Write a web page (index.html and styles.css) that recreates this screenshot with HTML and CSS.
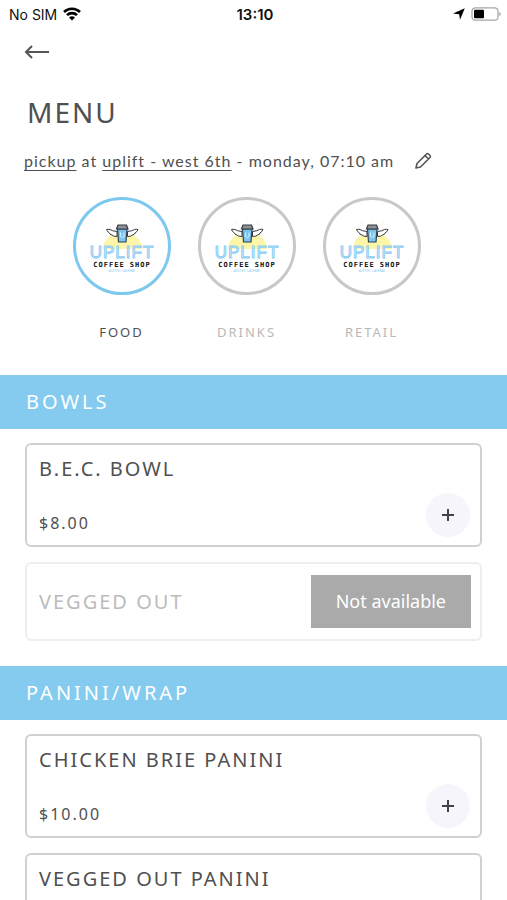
FILE: index.html
```html
<!DOCTYPE html>
<html lang="en">
<head>
    <meta charset="UTF-8">
    <meta name="viewport" content="width=device-width, initial-scale=1.0">
    <title>Uplift Coffee Shop - Menu</title>
    <link rel="stylesheet" href="styles.css">
</head>
<body>
    <div class="app">
        <div class="status-bar">
            <div class="status-left">
                <span>No SIM</span>
                <svg width="18" height="14" viewBox="0 0 18 14">
                    <path d="M1 5a11.500 11.500 0 0 1 16 0M4 8.200a7 7 0 0 1 10 0" fill="none" stroke="#000" stroke-width="2.600"/>
                    <path d="M9 13.500L6 10.600a4.400 4.400 0 0 1 6 0z"/>
                </svg>
            </div>
            <div class="status-time">13:10</div>
            <div class="status-right">
                <svg width="12" height="12" viewBox="0 0 12 12">
                    <path d="M11.800.3L7 11.800 6.200 6.200 0 5.500z"/>
                </svg>
                <svg width="30" height="14" viewBox="0 0 30 14">
                    <rect x="1" y=".8" width="26" height="12.400" rx="3.500" fill="none" stroke="#a6a6a6" stroke-width="1.300"/>
                    <rect x="3" y="2.800" width="10" height="8.400" rx="1"/>
                    <path d="M28.300 5v4q1.500-.5 1.500-2t-1.500-2z" fill="#a6a6a6"/>
                </svg>
            </div>
        </div>

        <header>
            <button class="back" aria-label="Back">
                <svg width="26" height="16" viewBox="0 0 26 16">
                    <path d="M25 8H2M8 2L2 8l6 6" fill="none" stroke="#555" stroke-width="2"/>
                </svg>
            </button>
            <h1>MENU</h1>
            <div class="order-info">
                <span><a href="#">pickup</a> at <a href="#">uplift - west 6th</a> - monday, 07:10 am</span>
                <button class="edit" aria-label="Edit order">
                    <svg width="18" height="18" viewBox="0 0 18 18">
                        <path d="M2 16l1-4.500L12.500 2q1-.8 2 0l1.500 1.500q.8 1 0 2L6.500 15zM11 3.500L14.500 7" fill="none" stroke="#555" stroke-width="1.600" stroke-linejoin="round"/>
                    </svg>
                </button>
            </div>
        </header>

        <nav class="categories">
            <button class="category active">
                <span class="circle">
                    <svg viewBox="0 0 92 92">
                        <!-- shop logo, reused by the other categories -->
                        <g id="logo">
                            <path d="M27 49a19.500 17 0 0 1 39 0z" fill="#fdf6a8"/>
                            <path d="M46 23v-3M37 25l-2-4M56 25l2-4M29 31l-4-3M64 31l4-3" stroke="#fdf9cf" stroke-width="1"/>
                            <path d="M41 31.500q-5-.5-7-2-2-.5-3.500 0 1 2.500 3 3.500 0 1.500 2.500 2 1 1.500 5 1.500zM51.500 31.500q5-.5 7-2 2-.5 3.500 0-1 2.500-3 3.500 0 1.500-2.500 2-1 1.500-5 1.500z" fill="#fff" stroke="#34393d" stroke-width="1" stroke-linejoin="round"/>
                            <path d="M41.500 29h9.500l-1 13h-7.500z" fill="#7cc5ef" stroke="#34434e" stroke-width="1.200"/>
                            <path d="M42 25h8.500l1.500 4H40.500z" fill="#8d9296" stroke="#34393d" stroke-width="1.200"/>
                            <path d="M44.500 32.500v4q1.700 2 3.500 0v-4" fill="none" stroke="#d7effc" stroke-width="1"/>
                            <text class="logo-name" x="46" y="58" text-anchor="middle">UPLIFT</text>
                            <text class="logo-shop" x="46" y="67" text-anchor="middle">COFFEE SHOP</text>
                            <text class="logo-tag" x="46" y="72" text-anchor="middle">AUSTIN / LAKEWAY</text>
                        </g>
                    </svg>
                </span>
                <span>FOOD</span>
            </button>
            <button class="category">
                <span class="circle"><svg viewBox="0 0 92 92"><use href="#logo"/></svg></span>
                <span>DRINKS</span>
            </button>
            <button class="category">
                <span class="circle"><svg viewBox="0 0 92 92"><use href="#logo"/></svg></span>
                <span>RETAIL</span>
            </button>
        </nav>

        <section>
            <h2>BOWLS</h2>
            <div class="items">
                <div class="item">
                    <div class="item-text">
                        <h3>B.E.C. BOWL</h3>
                        <p>$8.00</p>
                    </div>
                    <button class="add" aria-label="Add B.E.C. Bowl">
                        <svg width="12" height="12" viewBox="0 0 12 12"><path d="M6 0v12M0 6h12" stroke="#444" stroke-width="2"/></svg>
                    </button>
                </div>
                <div class="item sold-out">
                    <h3>VEGGED OUT</h3>
                    <button class="unavailable" disabled>Not available</button>
                </div>
            </div>
        </section>

        <section>
            <h2>PANINI/WRAP</h2>
            <div class="items">
                <div class="item">
                    <div class="item-text">
                        <h3>CHICKEN BRIE PANINI</h3>
                        <p>$10.00</p>
                    </div>
                    <button class="add" aria-label="Add Chicken Brie Panini">
                        <svg width="12" height="12" viewBox="0 0 12 12"><path d="M6 0v12M0 6h12" stroke="#444" stroke-width="2"/></svg>
                    </button>
                </div>
                <div class="item">
                    <div class="item-text">
                        <h3>VEGGED OUT PANINI</h3>
                    </div>
                </div>
            </div>
        </section>
    </div>
</body>
</html>
```
FILE: styles.css
```css
* {
    box-sizing: border-box;
}

body {
    margin: 0;
    background-color: #fff;
    color: #505050;
    font-family: 'Noto Sans', sans-serif;
}

h1, h2, h3, p {
    margin: 0;
    font-weight: 400;
}

button {
    padding: 0;
    border: none;
    background: none;
    color: inherit;
    font-family: inherit;
    cursor: pointer;
}

svg {
    display: block;
}

.app {
    height: 100vh;
    overflow-y: auto;
    scrollbar-width: none;
}

/* Status bar */
.status-bar {
    display: grid;
    grid-template-columns: 1fr auto 1fr;
    align-items: center;
    height: 28px;
    padding: 0 6px 0 9px;
    color: #111;
    font-family: Inter, sans-serif;
    font-size: 14px;
}

.status-left,
.status-right {
    display: flex;
    align-items: center;
    gap: 6px;
}

.status-right {
    justify-content: flex-end;
}

.status-time {
    font-size: 15px;
    font-weight: 600;
}

/* Header */
header {
    padding: 16px 24px 0;
}

.back {
    display: block;
}

h1 {
    margin-top: 32px;
    padding-left: 3px;
    font-size: 28px;
    line-height: 40px;
    letter-spacing: 2px;
}

.order-info {
    display: flex;
    align-items: center;
    gap: 20px;
    margin-top: 16px;
    font-family: Lato, sans-serif;
    font-size: 16px;
    line-height: 26px;
    letter-spacing: 1px;
    white-space: nowrap;
}

.order-info a {
    color: inherit;
    text-underline-offset: 3px;
}

/* Categories */
.categories {
    display: flex;
    justify-content: center;
    gap: 27px;
    padding: 23px 14px 0 0;
}

.category {
    display: flex;
    flex-direction: column;
    align-items: center;
    gap: 26px;
    color: #b8b8b8;
    font-size: 13px;
    line-height: 22px;
    letter-spacing: 2px;
}

.category.active {
    color: #505050;
}

.circle {
    width: 98px;
    height: 98px;
    border: 3px solid #c8c8c8;
    border-radius: 50%;
}

.active .circle {
    border-color: #7cc8ee;
}

.logo-name {
    fill: #eef8fe;
    stroke: #8dcdf2;
    stroke-width: 1px;
    font-family: 'Liberation Sans', sans-serif;
    font-size: 17px;
    letter-spacing: 1px;
}

.logo-shop {
    fill: #111;
    font-family: 'DejaVu Sans Mono', monospace;
    font-size: 7px;
    font-weight: 700;
    letter-spacing: 1px;
}

.logo-tag {
    fill: #8dcdf2;
    font-size: 3px;
    letter-spacing: 0;
}

/* Menu sections */
section {
    margin-top: 25px;
}

.categories + section {
    margin-top: 32px;
}

h2 {
    padding: 0 26px;
    background-color: #84cbef;
    color: #fff;
    font-size: 20px;
    line-height: 54px;
    letter-spacing: 3px;
}

.items {
    display: flex;
    flex-direction: column;
    gap: 15px;
    padding: 14px 25px 0;
}

.item {
    display: flex;
    justify-content: space-between;
    align-items: flex-end;
    min-height: 104px;
    padding: 8px 10px 8px 12px;
    border: 2px solid #d0d0d0;
    border-radius: 6px;
}

.item-text {
    align-self: stretch;
}

h3 {
    font-size: 20px;
    line-height: 32px;
    letter-spacing: 2px;
}

.item p {
    margin-top: 24px;
    font-size: 16px;
    line-height: 28px;
    letter-spacing: 2px;
}

.add {
    display: flex;
    justify-content: center;
    align-items: center;
    width: 44px;
    height: 44px;
    border-radius: 50%;
    background-color: #f5f5fb;
}

.sold-out {
    align-items: center;
    min-height: 79px;
    padding: 0 9px 0 12px;
    border-color: #eee;
    color: #bbb;
}

.unavailable {
    padding: 0 25px;
    background-color: #aaa;
    color: #fff;
    font-size: 18px;
    line-height: 53px;
    cursor: default;
}
```
